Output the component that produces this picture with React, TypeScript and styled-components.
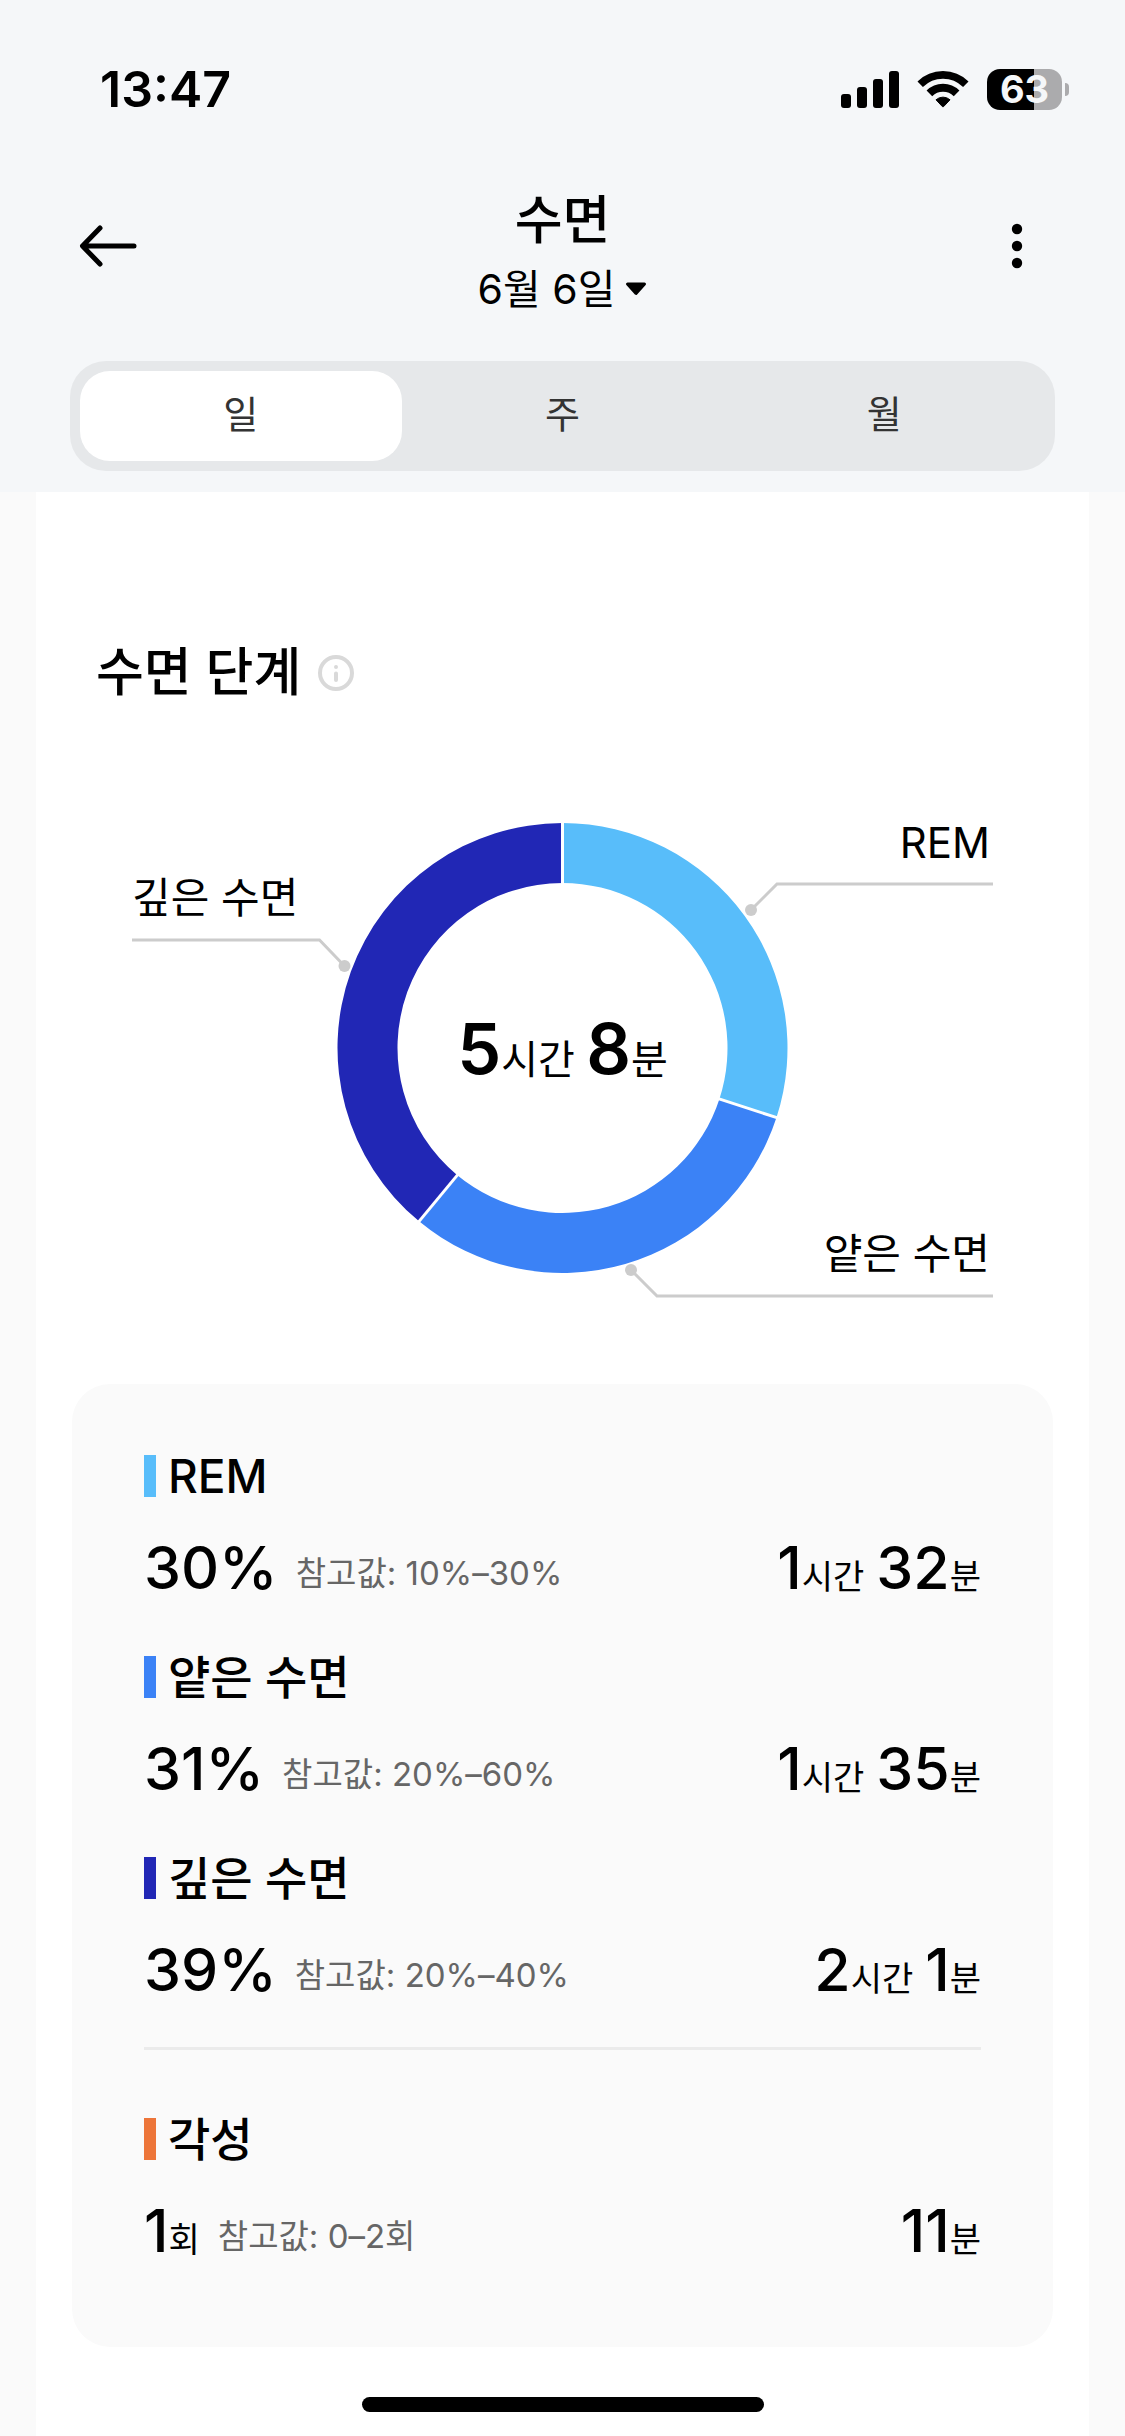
import React, { useState } from "react";
import styled, { createGlobalStyle } from "styled-components";

const GlobalStyle = createGlobalStyle`
  *, *::before, *::after { box-sizing: border-box; }
  body {
    margin: 0;
    background: #fafafa;
    color: #000;
    font-family: Inter, "Noto Sans CJK KR", sans-serif;
  }
  button { font: inherit; color: inherit; border: 0; padding: 0; background: none; cursor: pointer; }
  svg { display: block; }
`;

const Screen = styled.div`
  display: flex;
  flex-direction: column;
  min-height: 100vh;
`;

const Header = styled.header`
  background: #f5f7f9;
  padding-bottom: 21px;
`;

const StatusBar = styled.div`
  display: flex;
  align-items: center;
  justify-content: space-between;
  height: 178px;
  padding: 0 56px 0 100px;
`;

const Clock = styled.time`
  font-size: 50px;
  line-height: 60px;
  font-weight: 600;
`;

const StatusIcons = styled.div`
  display: flex;
  align-items: center;
  gap: 18px;
`;

const Battery = styled.div`
  display: flex;
  align-items: center;
  gap: 3px;
`;

const BatteryBody = styled.div<{ $level: number }>`
  display: grid;
  place-items: center;
  width: 75px;
  height: 41px;
  border-radius: 13px;
  background: linear-gradient(to right, #000 ${(p) => p.$level}%, #ababad ${(p) => p.$level}%);
  color: #f5f7f9;
  font-size: 38px;
  line-height: 41px;
  font-weight: 700;
`;

const BatteryTip = styled.div`
  width: 4px;
  height: 13px;
  border-radius: 0 4px 4px 0;
  background: #ababad;
`;

const NavBar = styled.nav`
  display: flex;
  align-items: center;
  justify-content: space-between;
  height: 135px;
  padding: 0 72px;
`;

const IconButton = styled.button`
  display: grid;
  place-items: center;
  width: 72px;
  height: 72px;
`;

const Heading = styled.div`
  display: flex;
  flex-direction: column;
  align-items: center;
  padding-top: 14px;
`;

const Title = styled.h1`
  margin: 0;
  font-size: 52px;
  line-height: 72px;
  font-weight: 500;
`;

const DateButton = styled.button`
  display: flex;
  align-items: center;
  gap: 10px;
  font-size: 41px;
  line-height: 64px;
`;

const Tabs = styled.div`
  display: flex;
  margin: 48px 70px 0;
  padding: 10px;
  border-radius: 36px;
  background: #e6e8ea;
`;

const Tab = styled.button<{ $active: boolean }>`
  flex: 1;
  height: 90px;
  padding-bottom: 4px;
  border-radius: 30px;
  background: ${(p) => (p.$active ? "#fff" : "transparent")};
  color: #333;
  font-size: 38px;
  line-height: 72px;
`;

const Sheet = styled.main`
  display: flex;
  flex-direction: column;
  flex: 1;
  margin: 0 36px;
  padding: 145px 36px 24px;
  background: #fff;
`;

const SectionHead = styled.div`
  display: flex;
  align-items: center;
  gap: 16px;
  padding-left: 24px;
`;

const SectionTitle = styled.h2`
  margin: 0;
  font-size: 52px;
  line-height: 72px;
  font-weight: 500;
`;

const Chart = styled.svg`
  align-self: center;
  width: calc(100% - 120px);
  height: auto;
  margin-top: 93px;
  font-family: Inter, "Noto Sans CJK KR", sans-serif;
`;

const StageCard = styled.section`
  margin-top: 86px;
  padding: 60px 72px 80px;
  border-radius: 38px;
  background: #fafafa;
`;

const Stage = styled.article`
  & + & { margin-top: 41px; }
`;

const StageName = styled.h3<{ $color: string }>`
  display: flex;
  align-items: center;
  gap: 12px;
  margin: 0;
  font-size: 46px;
  line-height: 64px;
  font-weight: 500;

  &::before {
    content: "";
    width: 12px;
    height: 42px;
    background: ${(p) => p.$color};
  }
`;

const StageValues = styled.div`
  display: flex;
  justify-content: space-between;
  margin-top: 24px;
`;

const Share = styled.div`
  display: flex;
  align-items: flex-end;
  gap: 18px;
`;

const Durations = styled.div`
  display: flex;
  gap: 12px;
`;

const Measure = styled.span`
  display: flex;
  align-items: baseline;
`;

const Figure = styled.span`
  font-size: 59px;
  line-height: 72px;
  font-weight: 500;
`;

const Unit = styled.span`
  font-size: 34px;
  line-height: 40px;
`;

const Reference = styled.span`
  color: #666;
  font-size: 33px;
  line-height: 62px;
`;

const Divider = styled.hr`
  height: 3px;
  margin: 41px 0 57px;
  border: 0;
  background: #ebebeb;
`;

const HomeIndicator = styled.div`
  align-self: center;
  width: 402px;
  height: 15px;
  margin-top: 50px;
  border-radius: 8px;
  background: #000;
`;

type Amount = [value: string, unit: string];

interface StageData {
  name: string;
  color: string;
  share: Amount;
  reference: string;
  duration: Amount[];
}

const stages: StageData[] = [
  { name: "REM", color: "#58bdfa", share: ["30%", ""], reference: "10%–30%", duration: [["1", "시간"], ["32", "분"]] },
  { name: "얕은 수면", color: "#3b82f6", share: ["31%", ""], reference: "20%–60%", duration: [["1", "시간"], ["35", "분"]] },
  { name: "깊은 수면", color: "#2127b5", share: ["39%", ""], reference: "20%–40%", duration: [["2", "시간"], ["1", "분"]] },
];

const awake: StageData = {
  name: "각성",
  color: "#ed7539",
  share: ["1", "회"],
  reference: "0–2회",
  duration: [["11", "분"]],
};

const CX = 430.5;
const CY = 226;
const OUTER = 225;
const INNER = 165;

function pointAt(fraction: number, radius: number) {
  const angle = fraction * 2 * Math.PI;
  return [CX + radius * Math.sin(angle), CY - radius * Math.cos(angle)];
}

function ringSlice(from: number, to: number) {
  const [ax, ay] = pointAt(from, OUTER);
  const [bx, by] = pointAt(to, OUTER);
  const [cx, cy] = pointAt(to, INNER);
  const [dx, dy] = pointAt(from, INNER);
  return `M${ax} ${ay}A${OUTER} ${OUTER} 0 0 1 ${bx} ${by}L${cx} ${cy}A${INNER} ${INNER} 0 0 0 ${dx} ${dy}Z`;
}

const slices = [
  { from: 0, to: 0.3, color: stages[0].color },
  { from: 0.3, to: 0.61, color: stages[1].color },
  { from: 0.61, to: 1, color: stages[2].color },
];

const leaders = [
  { line: "M619 88L645 62H861", dot: [619, 88] },
  { line: "M212.5 144L187.5 118H0", dot: [212.5, 144] },
  { line: "M499 448L525 474H861", dot: [499, 448] },
];

function SleepChart() {
  return (
    <Chart viewBox="0 -20 861 496" role="img" aria-label="수면 단계">
      {slices.map((s) => (
        <path key={s.from} d={ringSlice(s.from, s.to)} fill={s.color} />
      ))}
      {slices.map((s) => {
        const [x1, y1] = pointAt(s.from, OUTER + 2);
        const [x2, y2] = pointAt(s.from, INNER - 2);
        return <line key={s.from} x1={x1} y1={y1} x2={x2} y2={y2} stroke="#fff" strokeWidth="3" />;
      })}
      {leaders.map((l) => (
        <g key={l.line}>
          <path d={l.line} fill="none" stroke="#ccc" strokeWidth="3" />
          <circle cx={l.dot[0]} cy={l.dot[1]} r="6" fill="#ccc" />
        </g>
      ))}
      <g fontSize="42">
        <text x="858" y="36" textAnchor="end">REM</text>
        <text x="0" y="91">깊은 수면</text>
        <text x="858" y="447" textAnchor="end">얕은 수면</text>
      </g>
      <text x={CX} y="252" textAnchor="middle" fontSize="40">
        <tspan fontSize="70" fontWeight="600">5</tspan>시간 <tspan fontSize="70" fontWeight="600">8</tspan>분
      </text>
    </Chart>
  );
}

function StageItem({ stage }: { stage: StageData }) {
  const [shareValue, shareUnit] = stage.share;
  return (
    <Stage>
      <StageName $color={stage.color}>{stage.name}</StageName>
      <StageValues>
        <Share>
          <Measure>
            <Figure>{shareValue}</Figure>
            {shareUnit && <Unit>{shareUnit}</Unit>}
          </Measure>
          <Reference>참고값: {stage.reference}</Reference>
        </Share>
        <Durations>
          {stage.duration.map(([value, unit]) => (
            <Measure key={unit}>
              <Figure>{value}</Figure>
              <Unit>{unit}</Unit>
            </Measure>
          ))}
        </Durations>
      </StageValues>
    </Stage>
  );
}

const periods = ["일", "주", "월"];

export default function App() {
  const [period, setPeriod] = useState("일");

  return (
    <>
      <GlobalStyle />
      <Screen>
        <Header>
          <StatusBar>
            <Clock>13:47</Clock>
            <StatusIcons>
              <svg width="58" height="37" viewBox="0 0 58 37" aria-hidden="true">
                <rect x="0" y="23" width="10" height="14" rx="3" />
                <rect x="16" y="16" width="10" height="21" rx="3" />
                <rect x="32" y="8" width="10" height="29" rx="3" />
                <rect x="48" y="0" width="10" height="37" rx="3" />
              </svg>
              <svg width="52" height="38" viewBox="0 0 52 38" aria-hidden="true">
                <g fill="none" stroke="#000">
                  <path d="M3.2 14.2A32.3 32.3 0 0 1 48.8 14.2" strokeWidth="7.7" />
                  <path d="M12.4 23.4A19.2 19.2 0 0 1 39.6 23.4" strokeWidth="8" />
                </g>
                <path d="M19 29.8A10.5 10.5 0 0 1 33 29.8L26.6 36.6Q26 37.2 25.4 36.6Z" stroke="#000" strokeLinejoin="round" />
              </svg>
              <Battery>
                <BatteryBody $level={63}>63</BatteryBody>
                <BatteryTip />
              </Battery>
            </StatusIcons>
          </StatusBar>
          <NavBar>
            <IconButton aria-label="뒤로">
              <svg width="58" height="42" viewBox="0 0 58 42" fill="none" stroke="#000" strokeWidth="5" strokeLinecap="round" strokeLinejoin="round">
                <path d="M55 21H4M21 3L3.5 21L21 39" />
              </svg>
            </IconButton>
            <Heading>
              <Title>수면</Title>
              <DateButton>
                6월 6일
                <svg width="22" height="14" viewBox="0 0 22 14" aria-hidden="true">
                  <path d="M2.5 2H19.5L11 11.5Z" stroke="#000" strokeWidth="3" strokeLinejoin="round" />
                </svg>
              </DateButton>
            </Heading>
            <IconButton aria-label="더보기">
              <svg width="12" height="46" viewBox="0 0 12 46">
                <circle cx="6" cy="6" r="5.2" />
                <circle cx="6" cy="23" r="5.2" />
                <circle cx="6" cy="40" r="5.2" />
              </svg>
            </IconButton>
          </NavBar>
          <Tabs role="tablist">
            {periods.map((p) => (
              <Tab key={p} role="tab" aria-selected={p === period} $active={p === period} onClick={() => setPeriod(p)}>
                {p}
              </Tab>
            ))}
          </Tabs>
        </Header>
        <Sheet>
          <SectionHead>
            <SectionTitle>수면 단계</SectionTitle>
            <button aria-label="정보">
              <svg width="38" height="38" viewBox="0 0 38 38" fill="none" stroke="#d9d9d9" strokeWidth="4" strokeLinecap="round">
                <circle cx="19" cy="19" r="16" />
                <path d="M19 19.5V26M19 13V13.1" />
              </svg>
            </button>
          </SectionHead>
          <SleepChart />
          <StageCard>
            {stages.map((s) => (
              <StageItem key={s.name} stage={s} />
            ))}
            <Divider />
            <StageItem stage={awake} />
          </StageCard>
          <HomeIndicator />
        </Sheet>
      </Screen>
    </>
  );
}
